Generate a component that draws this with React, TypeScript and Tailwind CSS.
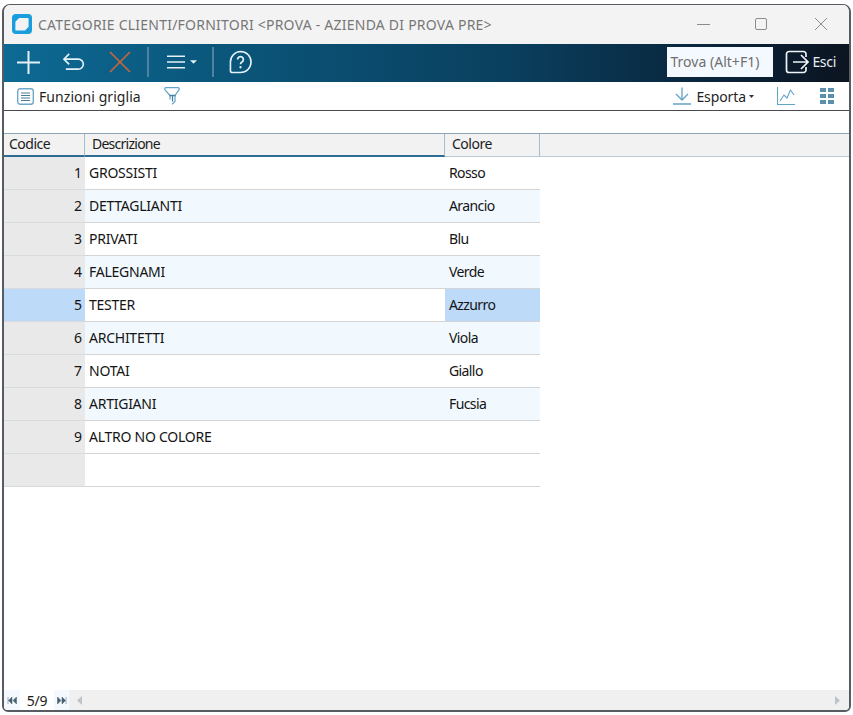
import React from "react";

const rows: [string, string, string][] = [
  ["1", "GROSSISTI", "Rosso"],
  ["2", "DETTAGLIANTI", "Arancio"],
  ["3", "PRIVATI", "Blu"],
  ["4", "FALEGNAMI", "Verde"],
  ["5", "TESTER", "Azzurro"],
  ["6", "ARCHITETTI", "Viola"],
  ["7", "NOTAI", "Giallo"],
  ["8", "ARTIGIANI", "Fucsia"],
  ["9", "ALTRO NO COLORE", ""],
  ["", "", ""],
];

const Sep = () => <div className="w-0.5 h-[30px] bg-[#5f8da8] opacity-80" />;

export default function App() {
  return (
    <div className="w-[853px] h-[715px] bg-white pt-[4px] pl-[2px] pr-[2px] overflow-hidden" style={{ fontFamily: '"Noto Sans", sans-serif' }}>
      <div className="h-[708px] flex flex-col border-2 border-t border-[#565c62] rounded-t-[8px] rounded-b-[6px] overflow-hidden bg-white">
        {/* Title bar */}
        <div className="h-[39px] shrink-0 bg-[#f3f3f3] flex items-center pl-[8px] pb-[1px]">
          <svg width="20" height="20" viewBox="0 0 20 20">
            <rect x="0" y="0" width="20" height="20" rx="4" fill="#1a9ddc" />
            <path d="M7.5 4.5H16V12.5L12.5 16H4V8z" fill="#f3f3f3" stroke="#f3f3f3" strokeWidth="1.2" strokeLinejoin="round" />
          </svg>
          <span className="ml-[6px] text-[14px] text-[#777777] tracking-[0.23px] whitespace-nowrap">CATEGORIE CLIENTI/FORNITORI &lt;PROVA - AZIENDA DI PROVA PRE&gt;</span>
          <div className="ml-auto flex items-center">
            <svg width="13" height="12" viewBox="0 0 13 12" className="mr-[45px]"><path d="M0 6.5h13" stroke="#8c8c8c" /></svg>
            <svg width="12" height="12" viewBox="0 0 12 12" className="mr-[47px]"><rect x="0.5" y="0.5" width="11" height="11" rx="1.5" fill="none" stroke="#8c8c8c" /></svg>
            <svg width="14" height="14" viewBox="0 0 14 14" className="mr-[21px]"><path d="M1 1l12 12M13 1L1 13" stroke="#8c8c8c" /></svg>
          </div>
        </div>

        {/* Dark toolbar */}
        <div className="h-[38px] shrink-0 flex items-center pb-[2px] bg-[linear-gradient(90deg,#0d6a94_0%,#0b5a80_20%,#0a3f5e_60%,#0a2339_85%,#0c1421_100%)]">
          <svg width="23" height="23" viewBox="0 0 23 23" className="ml-[13px]"><path d="M11.5 0v23M0 11.5h23" stroke="#e4f1f8" strokeWidth="2" /></svg>
          <svg width="23" height="20" viewBox="0 0 24 20" className="ml-[22px]" fill="none"><path d="M7.5 1.5L2 7l5.5 5.5M2 7h15a5 5 0 0 1 0 10.5H4" stroke="#e4f1f8" strokeWidth="1.7" /></svg>
          <svg width="22" height="22" viewBox="0 0 22 22" className="ml-[24px]"><path d="M1 1l20 20M21 1L1 21" stroke="#c8663a" strokeWidth="1.7" /></svg>
          <div className="ml-[16px]"><Sep /></div>
          <svg width="18" height="14" viewBox="0 0 19 14" className="ml-[18px]"><path d="M0 1h19M0 7h19M0 13h19" stroke="#e4f1f8" strokeWidth="1.7" /></svg>
          <svg width="7" height="4" viewBox="0 0 8 4" className="ml-[5px]"><path d="M0 0h8L4 4z" fill="#e4f1f8" /></svg>
          <div className="ml-[15px]"><Sep /></div>
          <svg width="23" height="24" viewBox="0 0 24 24" className="ml-[15px]" fill="none">
            <path d="M12 1a11 11 0 0 1 0 22H3.5a2 2 0 0 1-2-2V12A11 11 0 0 1 12 1z" stroke="#e4f1f8" strokeWidth="1.7" />
            <path d="M9 9.5a3 3 0 1 1 4.5 2.6c-1 .6-1.5 1.1-1.5 2.2" stroke="#e4f1f8" strokeWidth="1.8" />
            <circle cx="12" cy="17.5" r="1.2" fill="#e4f1f8" />
          </svg>
          <div className="ml-auto w-[106px] h-[30px] bg-[#f3f9ff] flex items-center pl-[3px] pb-[1px] text-[14px] text-[#6e6e6e] tracking-[0.03px] whitespace-nowrap">Trova (Alt+F1)</div>
          <svg width="24" height="24" viewBox="0 0 24 24" className="ml-[12px]" fill="none">
            <path d="M21 7V4a2.5 2.5 0 0 0-2.5-2.5H4A2.5 2.5 0 0 0 1.5 4v16A2.5 2.5 0 0 0 4 22.5h14.5A2.5 2.5 0 0 0 21 20v-3M8 12h14M16 5l7 7-7 7" stroke="#eef4f8" strokeWidth="1.7" />
          </svg>
          <span className="ml-[3px] mr-[13px] pb-[1px] text-[14px] text-[#e8eef2] tracking-[-0.3px]">Esci</span>
        </div>

        {/* Secondary toolbar */}
        <div className="h-[28px] shrink-0 flex items-center border-b border-[#4a4a4a] box-content">
          <svg width="17" height="17" viewBox="0 0 17 17" className="ml-[13px]" fill="none">
            <rect x="0.7" y="0.7" width="15.6" height="15.6" rx="2.5" stroke="#6fa8c9" strokeWidth="1.4" />
            <path d="M4 5h9M4 7.5h9M4 10h9M4 12.5h9" stroke="#4a7d9c" />
          </svg>
          <span className="ml-[5px] text-[14px] text-[#1f1f1f] tracking-[0.06px] whitespace-nowrap">Funzioni griglia</span>
          <svg width="16" height="18" viewBox="0 0 16 18" className="ml-[23px]" fill="none" stroke="#63a3c7" strokeWidth="1.2">
            <path d="M2 0.7h12a1.3 1.3 0 0 1 1 2.1L11 8.5v6l-3 2.8" />
            <path d="M2 0.7a1.3 1.3 0 0 0-1 2.1l5 5.7v4" />
            <path d="M5.5 8.5h6M8.5 8.5v6" stroke="#4b7f9f" strokeWidth="1.3" />
          </svg>
          <svg width="18" height="18" viewBox="0 0 18 18" className="ml-auto" fill="none" stroke="#63a3c7" strokeWidth="1.3">
            <path d="M9 0.5v12M3 7l6 6 6-6M0 17h18" />
          </svg>
          <span className="ml-[5px] text-[14px] text-[#1f1f1f] tracking-[-0.1px]">Esporta</span>
          <svg width="5" height="3" viewBox="0 0 5 3" className="ml-[3px]"><path d="M0 0h5L2.5 3z" fill="#333" /></svg>
          <svg width="18" height="18" viewBox="0 0 18 18" className="ml-[23px]" fill="none" stroke="#63a3c7" strokeWidth="1.1">
            <path d="M0.5 0v17.5h17.5M3 14l4-6 3 3 3.5-8 3.5 5" />
          </svg>
          <div className="ml-[25px] mr-[15px] grid grid-cols-2 gap-x-[2px] gap-y-[2px]">
            {[0, 1, 2, 3, 4, 5].map((i) => (
              <div key={i} className="w-[6px] h-[4px] bg-[#5b8fae]" />
            ))}
          </div>
        </div>

        {/* Spacer */}
        <div className="h-[22px] shrink-0" />

        {/* Header */}
        <div className="h-[24px] shrink-0 flex bg-[#f2f2f2] border-t border-[#8fa4ba] border-b border-b-[#b8c9d9] text-[14px] text-[#1c1c1c] leading-[20px]">
          <div className="w-[81px] border-r border-[#a9bccd] border-b-2 border-b-[#2d6d94] pl-[5px] -mb-px tracking-[-0.5px]">Codice</div>
          <div className="w-[360px] border-r border-[#a9bccd] border-b-2 border-b-[#2d6d94] pl-[7px] -mb-px tracking-[-0.75px]">Descrizione</div>
          <div className="w-[95px] border-r border-[#a9bccd] pl-[7px] tracking-[-0.5px]">Colore</div>
        </div>

        {/* Rows */}
        <div className="flex-1 min-h-0">
          {rows.map(([c, d, col], i) => {
            const alt = i % 2 === 1 && i < 9;
            const sel = i === 4;
            return (
              <div key={i} className="flex h-[33px] w-[536px] text-[14px] text-[#141414]">
                <div className={`w-[81px] flex items-center justify-end pr-[3px] pb-[2px] border-b border-[#d8dbde] ${sel ? "bg-[#bddaf8]" : "bg-[#e9e9e9]"}`}>{c}</div>
                <div className={`w-[360px] flex items-center pl-[4px] pb-[2px] border-b border-[#d4d4d4] tracking-[-0.25px] ${alt ? "bg-[#f1f9fe]" : "bg-white"}`}>{d}</div>
                <div className={`w-[95px] flex items-center pl-[4px] pb-[2px] border-b border-[#d4d4d4] tracking-[-0.6px] ${sel ? "bg-[#bddaf8]" : alt ? "bg-[#f1f9fe]" : "bg-white"}`}>{col}</div>
              </div>
            );
          })}
        </div>

        {/* Status bar */}
        <div className="h-[20px] shrink-0 flex items-center bg-[#f0f0f0]">
          <div className="w-[16px] h-full bg-[#f3f9ff] flex items-center justify-center">
            <svg width="10" height="7" viewBox="0 0 10 7"><path d="M1 0v7M5 0v7L1.5 3.5zM9.5 0v7L6 3.5z" fill="#4a6070" stroke="#4a6070" strokeWidth="0.5" /></svg>
          </div>
          <div className="w-[34px] h-full bg-white flex items-center justify-center text-[14px] text-[#1c1c1c] tracking-[-0.3px]">5/9</div>
          <div className="w-[15px] h-full bg-[#f3f9ff] flex items-center justify-center">
            <svg width="10" height="7" viewBox="0 0 10 7"><path d="M9 0v7M5 0v7L8.5 3.5zM0.5 0v7L4 3.5z" fill="#4a6070" stroke="#4a6070" strokeWidth="0.5" /></svg>
          </div>
          <svg width="5" height="9" viewBox="0 0 5 9" className="ml-[8px]"><path d="M5 0v9L0 4.5z" fill="#bcc3c9" /></svg>
          <svg width="5" height="9" viewBox="0 0 5 9" className="ml-auto mr-[9px]"><path d="M0 0v9l5-4.5z" fill="#bcc3c9" /></svg>
        </div>
      </div>
    </div>
  );
}
